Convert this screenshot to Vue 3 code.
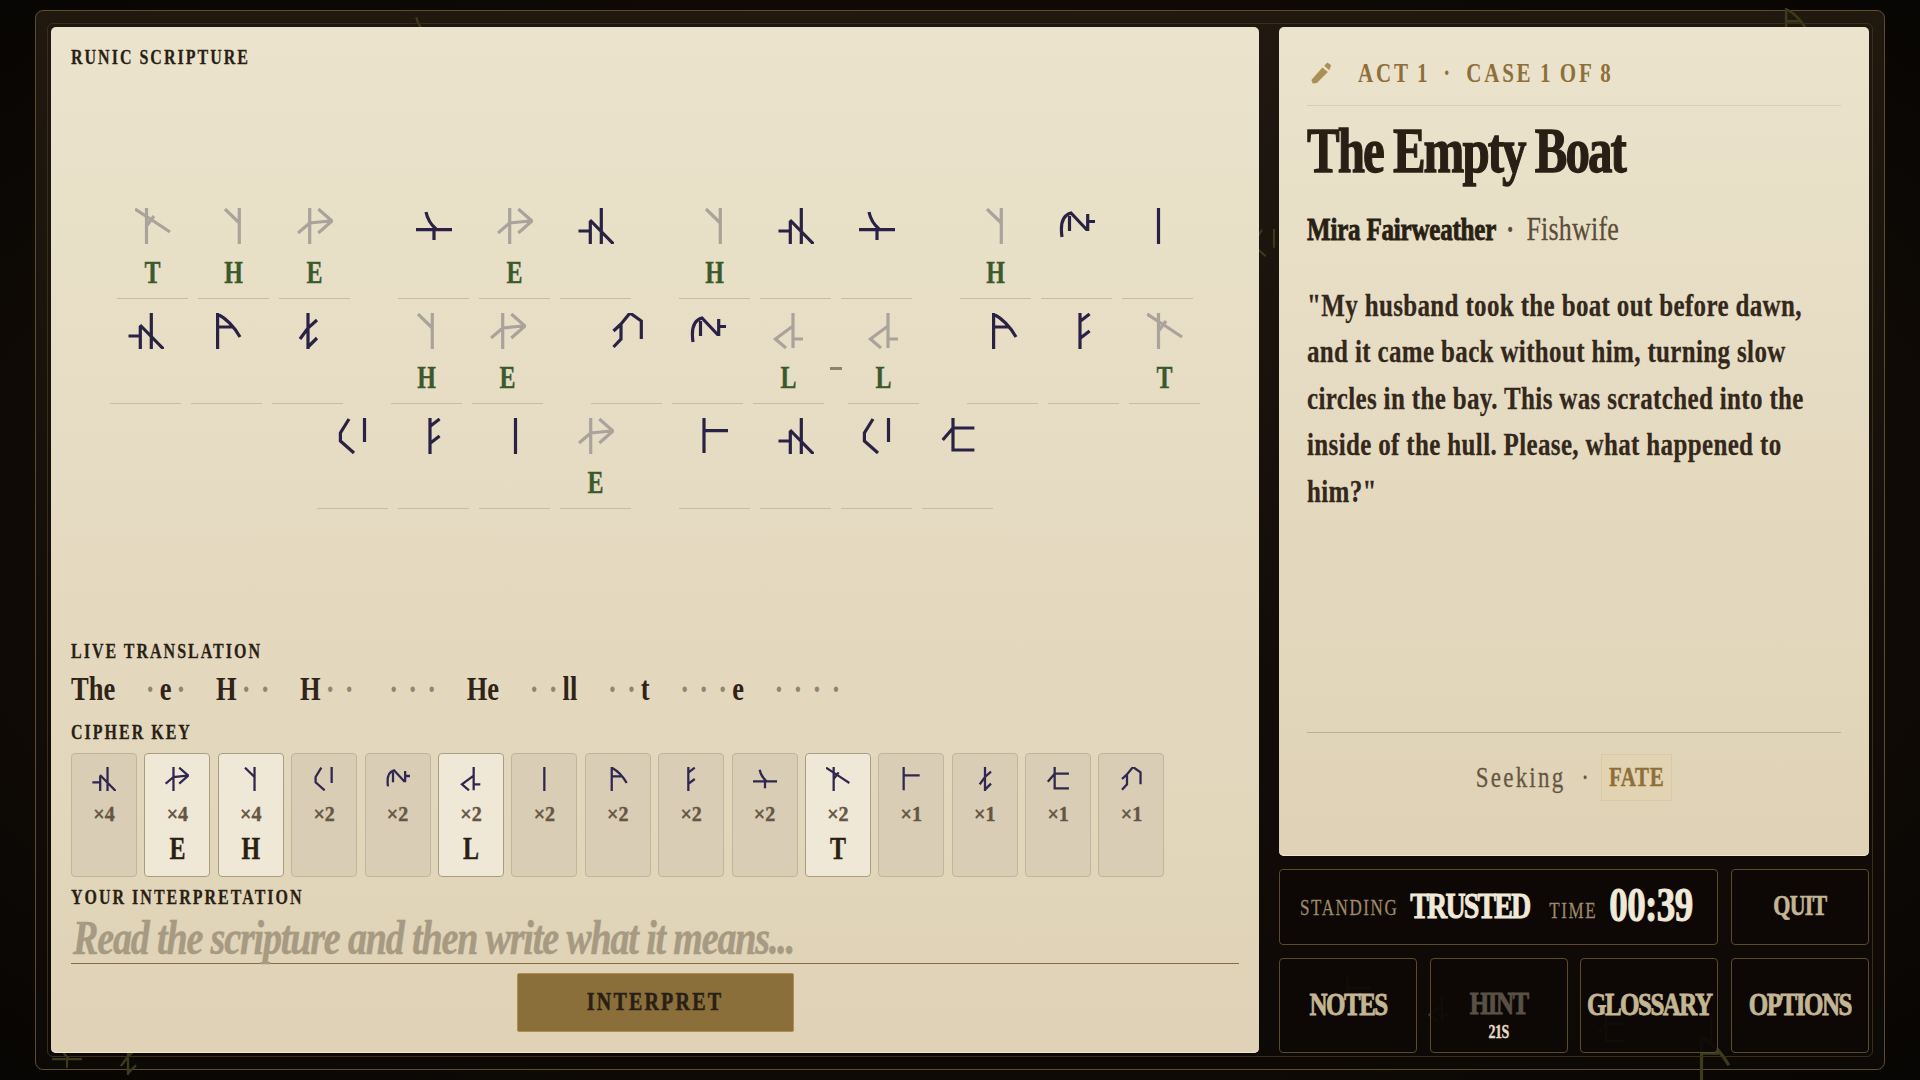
<!--
App.vue: runic scripture puzzle screen
-->
<template>
  <div class="page">
    <div class="frame">
      <svg
        v-for="(g, i) in ghosts"
        :key="i"
        class="ghost"
        viewBox="0 0 36 36"
        :style="{ left: g.x + 'px', top: g.y + 'px', width: g.s + 'px', height: g.s + 'px' }"
      >
        <path :d="runes[g.r]" />
      </svg>
      <div class="inner">
        <section class="panel left">
          <div class="label"><span class="tall">RUNIC SCRIPTURE</span></div>

          <div class="scripture">
            <div v-for="(row, ri) in rows" :key="ri" class="row">
              <template v-for="(word, wi) in row" :key="wi">
                <div v-if="wi" class="word-gap"></div>
                <template v-for="(r, ci) in word" :key="ci">
                  <div v-if="r === '-'" class="hyphen"></div>
                  <div v-else class="cell" :class="{ known: known[r] }">
                    <svg class="rune" viewBox="0 0 36 36"><path :d="runes[r]" /></svg>
                    <span class="cell-letter tall">{{ known[r] }}</span>
                  </div>
                </template>
              </template>
            </div>
          </div>

          <div class="label live-label"><span class="tall">LIVE TRANSLATION</span></div>
          <div class="live">
            <div v-for="(word, i) in liveWords" :key="i" class="live-word">
              <span
                v-for="(c, j) in word"
                :key="j"
                class="tall"
                :class="c === '·' ? 'dot' : 'ch'"
              >{{ c }}</span>
            </div>
          </div>

          <div class="label key-label"><span class="tall">CIPHER KEY</span></div>
          <div class="key">
            <div v-for="k in keyList" :key="k.r" class="key-cell" :class="{ solved: known[k.r] }">
              <svg class="key-rune" viewBox="0 0 36 36"><path :d="runes[k.r]" /></svg>
              <span class="key-count">×{{ k.n }}</span>
              <span class="key-letter tall">{{ known[k.r] }}</span>
            </div>
          </div>

          <div class="label your-label"><span class="tall">YOUR INTERPRETATION</span></div>
          <div class="answer"><span class="tall">Read the scripture and then write what it means...</span></div>
          <div class="btn-row">
            <div class="interpret"><span class="tall">INTERPRET</span></div>
          </div>
        </section>

        <div class="side">
          <section class="panel case">
            <div class="case-head">
              <svg class="pencil" viewBox="0 0 24 24">
                <path d="M1.500 19.500 L13.500 6 L19.500 11 L7.500 23 L3 23.500 Z M15.500 4 L19 0.500 L23 3.500 L21 9 Z" />
              </svg>
              <span class="tall">ACT 1 &nbsp;·&nbsp; CASE 1 OF 8</span>
            </div>
            <h1 class="title"><span class="tall">The Empty Boat</span></h1>
            <div class="who">
              <span class="tall name">Mira Fairweather</span>
              <span class="tall sep">·</span>
              <span class="tall job">Fishwife</span>
            </div>
            <div class="story">
              <p v-for="line in story" :key="line"><span class="tall">{{ line }}</span></p>
            </div>
            <div class="seek">
              <span class="tall">Seeking &nbsp;·</span>
              <span class="fate"><span class="tall">FATE</span></span>
            </div>
          </section>

          <div class="controls">
            <div class="box status">
              <span class="tall st-label st-first">STANDING</span>
              <span class="tall st-value">TRUSTED</span>
              <span class="tall st-label time-label">TIME</span>
              <span class="tall st-time">00:39</span>
            </div>
            <div class="box btn quit"><span class="tall">QUIT</span></div>
            <div class="box btn big"><span class="tall">NOTES</span></div>
            <div class="box btn big off">
              <span class="tall">HINT</span>
              <span class="tall cool">21S</span>
            </div>
            <div class="box btn big"><span class="tall">GLOSSARY</span></div>
            <div class="box btn big"><span class="tall">OPTIONS</span></div>
          </div>
        </div>
      </div>
    </div>
  </div>
</template>

<script setup>
const runes = {
  n: 'M23.300 0V36M12.300 13V36M12 12L35.500 36M0.500 23H13',
  e: 'M12.700 0V36M1 25L12.700 15L33 13M21.300 1L35 13L21.300 25',
  h: 'M23.300 0V36M9 1L23.300 15',
  ki: 'M29.500 0V24M14 1L5.400 15V23L19 35',
  w: 'M3 29Q0 8 12 5L28 22M28.700 6V23M28 13.500H36M10.500 8V23',
  l: 'M22 0V35M22 13L4.400 26L15 35M22 26H32',
  i: 'M18.500 0V36',
  a: 'M8.600 0V36M8.600 1Q22 8 31 24M8.600 14H22.800',
  f: 'M14 0V36M23.600 1L14.500 8M23.600 18L14.500 25',
  x: 'M0 21.700H36M18 21.700V32M10 4Q12 14 20 21',
  t: 'M11.500 0V36M0 1L20 14L35 24M11.500 18L19 8',
  p: 'M7 0V35M7 12.700H31',
  z: 'M18 0V36M27 7L18 15L10 26M27 25L18 34',
  tt: 'M13 0V32H34.400M13 10H34.400M13 10L2.700 22',
  arch: 'M32.300 26V8L21 0L12 11V26L4.500 34M4.500 18L12 11'
}

const known = { t: 'T', h: 'H', e: 'E', l: 'L' }

const rows = [
  [['t', 'h', 'e'], ['x', 'e', 'n'], ['h', 'n', 'x'], ['h', 'w', 'i']],
  [['n', 'a', 'z'], ['h', 'e'], ['arch', 'w', 'l', '-', 'l'], ['a', 'f', 't']],
  [['ki', 'f', 'i', 'e'], ['p', 'n', 'ki', 'tt']]
]

const liveWords = ['The', '·e·', 'H··', 'H··', '···', 'He', '··ll', '··t', '···e', '····']

const keyList = [
  { r: 'n', n: 4 }, { r: 'e', n: 4 }, { r: 'h', n: 4 }, { r: 'ki', n: 2 }, { r: 'w', n: 2 },
  { r: 'l', n: 2 }, { r: 'i', n: 2 }, { r: 'a', n: 2 }, { r: 'f', n: 2 }, { r: 'x', n: 2 },
  { r: 't', n: 2 }, { r: 'p', n: 1 }, { r: 'z', n: 1 }, { r: 'tt', n: 1 }, { r: 'arch', n: 1 }
]

const story = [
  '"My husband took the boat out before dawn,',
  'and it came back without him, turning slow',
  'circles in the bay. This was scratched into the',
  'inside of the hull. Please, what happened to',
  'him?"'
]

// faint runes drawn on the dark frame behind the panels
const ghosts = [
  { r: 'x', x: 372, y: 3, s: 30 },
  { r: 'a', x: 1742, y: -3, s: 34 },
  { r: 'f', x: 1790, y: 50, s: 30 },
  { r: 'ki', x: 1215, y: 218, s: 28 },
  { r: 'x', x: 16, y: 1030, s: 30 },
  { r: 'z', x: 76, y: 1032, s: 32 },
  { r: 'a', x: 1655, y: 1025, s: 44 },
  { r: 'p', x: 1305, y: 965, s: 34 },
  { r: 'l', x: 1390, y: 985, s: 26 },
  { r: 'tt', x: 1560, y: 1005, s: 28 },
  { r: 'i', x: 1660, y: 1005, s: 30 }
]
</script>

<style>
html, body { margin: 0; background: #070503; }
</style>

<style scoped>
.page {
  width: 1920px; height: 1080px; box-sizing: border-box;
  padding: 10px 35px 10px 35px;
  background: radial-gradient(ellipse at center, #1a120a 0%, #0f0a06 70%, #070503 100%);
  font-family: "Liberation Serif", serif;
  color: #2a1f14;
}
.frame {
  position: relative; height: 100%; box-sizing: border-box;
  border: 1px solid #5f4c29; border-radius: 8px;
  padding: 12px 11px 12px 11px;
  background: linear-gradient(180deg, #211910 0%, #130d08 60%, #0d0906 100%);
}
.ghost {
  position: absolute; fill: none; stroke: #3d3c1a; stroke-width: 2.6;
}
.inner {
  position: relative; height: 100%; box-sizing: border-box;
  border: 1px solid #3a2e19; border-radius: 6px;
  padding: 3px;
  display: flex; gap: 20px;
}
.tall { display: inline-block; transform: scaleY(1.3); }

.panel {
  background: linear-gradient(180deg, #ebe3cc 0%, #dfd2b6 100%);
  border-radius: 5px;
  box-shadow: inset 0 -1px 0 #efe7d4;
  box-sizing: border-box;
}
.left {
  width: 1208px; padding: 0 20px 21px 20px;
  display: flex; flex-direction: column;
}
.label {
  font-size: 16px; font-weight: 700; letter-spacing: 2px;
  line-height: 20px; color: #2a1f14; -webkit-text-stroke: 0.2px #2a1f14;
}
.left > .label:first-child { margin-top: 20px; }

.scripture {
  flex: 1; display: flex; flex-direction: column; padding-top: 9px;
  justify-content: center; gap: 14px;
}
.row { display: flex; justify-content: center; gap: 10px; }
.word-gap { width: 28px; }
.hyphen {
  width: 12px; height: 3px; margin: 54px -4px 0 -4px;
  background: #8f8268;
}
.cell {
  width: 71px; height: 91px; box-sizing: border-box;
  border-bottom: 1px solid #c9bca2;
  display: flex; flex-direction: column; align-items: center;
}
.rune {
  width: 36px; height: 36px; flex: none;
  fill: none; stroke: #2a2245; stroke-width: 3.200;
}
.cell.known .rune { stroke: #aaa39b; }
.cell-letter {
  margin-top: 15px; font-size: 24px; font-weight: 700; line-height: 28px;
  color: #3b5a2c; -webkit-text-stroke: 0.3px #3b5a2c;
}

.live {
  display: flex; gap: 25.500px; height: 40px; margin-top: 7px;
  align-items: center; font-size: 26.500px; font-weight: 700; line-height: 40px;
}
.live-word { display: flex; }
.dot { width: 19px; text-align: center; color: #8f8672; }
.ch { color: #2f2417; }
.key-label { margin-top: 14px; }
.key { display: flex; gap: 7.400px; margin-top: 11px; }
.key-cell {
  width: 66px; height: 124px; box-sizing: border-box;
  background: #d9cdb5; border: 1px solid #c2b59b; border-radius: 4px;
  display: flex; flex-direction: column; align-items: center;
  padding-top: 13px;
}
.key-cell.solved { background: #f0e8d6; border-color: #ab9c80; }
.key-rune {
  width: 24px; height: 24px; flex: none;
  fill: none; stroke: #2f2750; stroke-width: 3.400;
}
.key-count {
  margin-top: 12px; font-size: 20px; font-weight: 700; line-height: 22px;
  color: #655643; -webkit-text-stroke: 0.4px #655643;
}
.key-letter {
  margin-top: 10px; font-size: 24px; font-weight: 700; line-height: 28px;
  color: #2a1f14; -webkit-text-stroke: 0.3px #2a1f14;
}
.your-label { margin-top: 10px; }
.answer {
  height: 50px; margin-top: 7px; border-bottom: 1px solid #8a6c3c;
  font-size: 38px; font-style: italic; font-weight: 700; line-height: 46px;
  letter-spacing: -1.140px; color: #a69a83; padding-left: 2px;
  -webkit-text-stroke: 0.4px #a69a83; box-sizing: border-box;
}
.btn-row { display: flex; justify-content: center; margin-top: 9px; }
.interpret {
  width: 277px; height: 59px; box-sizing: border-box;
  background: #8b6f3b; border: 1px solid #ad8f4f; border-radius: 2px;
  display: flex; align-items: center; justify-content: center;
  font-size: 20px; font-weight: 700; letter-spacing: 2.200px; color: #2a1f14;
  -webkit-text-stroke: 0.4px #2a1f14; padding-bottom: 2px;
}

.side { width: 590px; display: flex; flex-direction: column; gap: 13px; }
.case {
  flex: 1; padding: 0 28px;
  display: flex; flex-direction: column;
}
.case-head {
  height: 79px; box-sizing: border-box; padding-top: 25px;
  border-bottom: 1px solid #dccdb0;
  display: flex; align-items: flex-start;
  font-size: 21px; font-weight: 700; letter-spacing: 2.800px; word-spacing: -1.500px;
  line-height: 42px; color: #8e6f3a;
}
.pencil {
  width: 22px; height: 22px; margin: 10px 26px 0 3px; flex: none; fill: #ab9056;
}
.title {
  margin: 3px 0 0 0; height: 98px; font-size: 49px; font-weight: 700; line-height: 84px;
  color: #2a1f14; letter-spacing: -2px; -webkit-text-stroke: 1px #2a1f14;
}
.who {
  display: flex; align-items: center; gap: 10px; height: 46px;
  font-size: 25px; line-height: 46px;
}
.name { font-weight: 700; letter-spacing: -0.200px; -webkit-text-stroke: 0.7px #2a1f14; }
.sep { color: #5b4d3a; font-weight: 700; }
.job { color: #5b4d3a; margin-left: 2px; font-size: 26px; letter-spacing: 0.200px; -webkit-text-stroke: 0.2px #5b4d3a; }
.story {
  flex: 1; margin-top: 30px;
  font-size: 25px; font-weight: 700; line-height: 46.400px; color: #33281b;
  letter-spacing: 0.350px; -webkit-text-stroke: 0.2px #33281b;
}
.story p { margin: 0; white-space: nowrap; }
.seek {
  height: 92px; border-top: 1px solid #bfae90; margin-bottom: 32px;
  display: flex; align-items: center; justify-content: center; gap: 10px;
  font-size: 23px; letter-spacing: 2.200px; color: #655643;
  padding-bottom: 2px; box-sizing: border-box; -webkit-text-stroke: 0.2px #655643;
}
.fate {
  width: 71px; height: 47px; box-sizing: border-box;
  display: flex; align-items: center; justify-content: center;
  background: #e2d4b3; border: 1px solid #d9c9a5;
  font-size: 21px; font-weight: 700; letter-spacing: 0.600px; color: #8e6f3a;
  -webkit-text-stroke: 0.3px #8e6f3a;
}

.controls {
  display: grid; gap: 13px 12.300px;
  grid-template-columns: repeat(4, 1fr);
  grid-template-rows: 76px 95px;
}
.box {
  background: rgba(13, 9, 6, 0.93);
  border: 1px solid #5c4a28; border-radius: 4px;
  box-sizing: border-box;
}
.status {
  grid-column: 1 / 4;
  display: flex; align-items: center; padding-left: 20px;
}
.st-label { font-size: 17px; letter-spacing: 1.600px; color: #9d8a68; -webkit-text-stroke: 0.2px #9d8a68; }
.st-first { margin-top: 2px; }
.st-value {
  margin: -3px 0 0 12px; font-size: 28px; font-weight: 700; letter-spacing: -1.900px;
  color: #f1e9d8; -webkit-text-stroke: 0.7px #f1e9d8;
}
.time-label { margin-left: 20px; margin-top: 7px; }
.st-time {
  margin: -5px 0 0 12px; font-size: 37px; font-weight: 700; letter-spacing: -0.600px;
  color: #f1e9d8; -webkit-text-stroke: 0.8px #f1e9d8;
}
.btn {
  display: flex; flex-direction: column; align-items: center; justify-content: center;
  font-weight: 700; color: #c4b593;
}
.quit { font-size: 22px; letter-spacing: -0.800px; padding-bottom: 2px; -webkit-text-stroke: 0.5px #c4b593; }
.big { font-size: 25px; letter-spacing: -1.500px; padding-bottom: 2px; -webkit-text-stroke: 0.7px #c4b593; }
.off { color: #5a5145; padding-top: 20px; -webkit-text-stroke: 0.7px #5a5145; }
.cool {
  font-size: 14px; color: #e6dcc6; line-height: 14px; margin-top: 8px; letter-spacing: -0.500px;
  -webkit-text-stroke: 0.3px #e6dcc6;
}
</style>
